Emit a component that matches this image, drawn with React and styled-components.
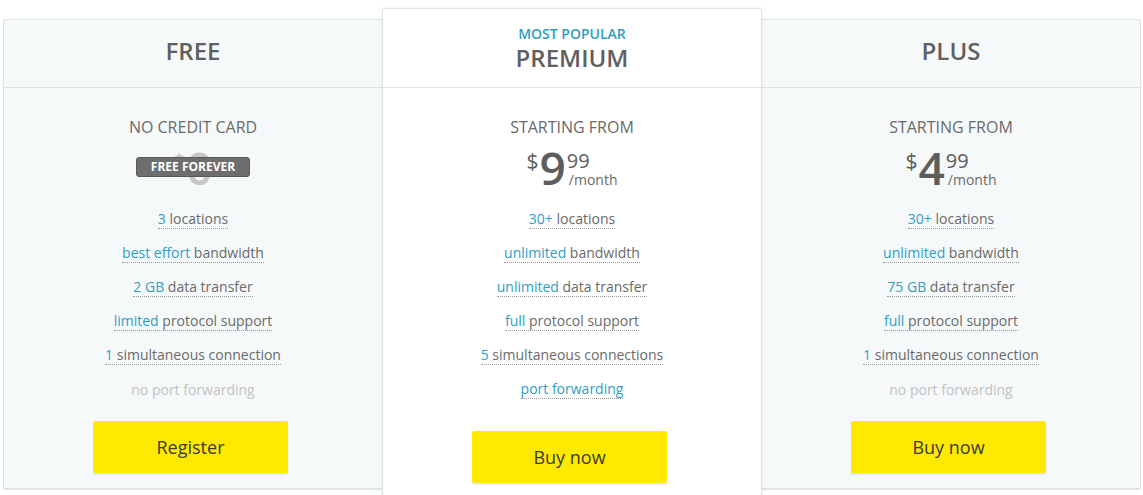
import React from 'react';
import styled, { createGlobalStyle } from 'styled-components';

const GlobalStyle = createGlobalStyle`
    * { box-sizing: border-box; }
    body {
        margin: 0;
        background: #ffffff;
        font-family: "Open Sans", "Liberation Sans", sans-serif;
        color: #666666;
    }
`;

const Plans = styled.div`
    display: flex;
    align-items: flex-start;
    padding-left: 3px;
    height: 495px;
    overflow: hidden;
`;

const Card = styled.div`
    position: relative;
    width: 380px;
    margin-top: ${p => (p.featured ? '8px' : '19px')};
    margin-left: ${p => (p.first ? '0' : '-1px')};
    z-index: ${p => (p.featured ? 1 : 0)};
    background: ${p => (p.featured ? '#ffffff' : '#f6f9fa')};
    border: 1px solid #dde4e6;
    border-bottom-width: ${p => (p.featured ? '1px' : '2px')};
    border-radius: ${p => (p.featured ? '3px' : '2px')};
    box-shadow: ${p => (p.featured ? '0 0 4px rgba(0, 0, 0, 0.06)' : 'none')};
    padding-bottom: ${p => (p.featured ? '25px' : '15px')};
`;

const Header = styled.div`
    height: ${p => (p.featured ? '79px' : '68px')};
    padding-top: ${p => (p.featured ? '16px' : '17px')};
    border-bottom: 1px solid #dde4e6;
    text-align: center;
`;

const Tag = styled.div`
    font-size: 14px;
    line-height: 18px;
    font-weight: 600;
    color: #2e9ec3;
    text-transform: uppercase;
`;

const Title = styled.div`
    font-size: 24px;
    line-height: 28px;
    font-weight: 600;
    color: #606060;
    margin-top: ${p => (p.featured ? '1px' : '0')};
`;

const Body = styled.div`
    padding-top: 28px;
    text-align: center;
`;

const Subtitle = styled.div`
    font-size: 16px;
    line-height: 22px;
    color: #6a6a6a;
    text-transform: uppercase;
`;

const PriceRow = styled.div`
    position: relative;
    display: flex;
    justify-content: center;
    align-items: flex-start;
    height: 46px;
    margin-top: 6px;
    color: ${p => (p.muted ? '#c6c6c6' : '#5d5d5d')};
`;

const Currency = styled.span`
    font-size: 21px;
    line-height: 20px;
    margin-top: 7px;
    margin-right: 1px;
`;

const Amount = styled.span`
    font-size: 46px;
    line-height: 46px;
    font-weight: 600;
`;

const Cents = styled.div`
    display: flex;
    flex-direction: column;
    align-items: flex-start;
    margin-top: 7px;
    margin-left: 1px;
`;

const Decimals = styled.span`
    font-size: 20px;
    line-height: 20px;
`;

const Period = styled.span`
    font-size: 14px;
    line-height: 16px;
    margin-top: 1px;
    margin-left: 2px;
    color: #6a6a6a;
`;

const Badge = styled.span`
    position: absolute;
    left: 50%;
    top: 13px;
    transform: translateX(-50%);
    width: 114px;
    height: 20px;
    border: 1px solid #585858;
    border-radius: 3px;
    background: #6e6e6e;
    color: #ffffff;
    font-size: 12px;
    line-height: 18px;
    font-weight: 700;
    white-space: nowrap;
`;

const Features = styled.ul`
    list-style: none;
    margin: 12px 0 0;
    padding: 0;
`;

const Feature = styled.li`
    height: 34px;
    display: flex;
    justify-content: center;
    align-items: center;
    font-size: 14px;
`;

const FeatureText = styled.span`
    line-height: 19px;
    color: ${p => (p.off ? '#c2c2c2' : '#6a6a6a')};
    border-bottom: ${p => (p.off ? 'none' : '1px dotted #9a9a9a')};
`;

const Hl = styled.span`
    color: #2e9ec3;
`;

const Button = styled.button`
    display: block;
    width: 195px;
    height: 52px;
    margin: ${p => (p.featured ? '25px' : '15px')} 0 0 89px;
    border: none;
    border-radius: 2px;
    background: #ffe900;
    box-shadow: 0 2px 1px rgba(0, 0, 0, 0.08);
    font-family: "Open Sans", "Liberation Sans", sans-serif;
    font-size: 18px;
    color: #3a3a3a;
    cursor: pointer;
`;

const plans = [
  {
    name: 'Free',
    subtitle: 'No credit card',
    price: '0',
    free: true,
    button: 'Register',
    features: [
      { hl: '3', rest: ' locations' },
      { hl: 'best effort', rest: ' bandwidth' },
      { hl: '2 GB', rest: ' data transfer' },
      { hl: 'limited', rest: ' protocol support' },
      { hl: '1', rest: ' simultaneous connection' },
      { rest: 'no port forwarding', off: true },
    ],
  },
  {
    name: 'Premium',
    tag: 'Most popular',
    featured: true,
    subtitle: 'Starting from',
    price: '9',
    cents: '99',
    button: 'Buy now',
    features: [
      { hl: '30+', rest: ' locations' },
      { hl: 'unlimited', rest: ' bandwidth' },
      { hl: 'unlimited', rest: ' data transfer' },
      { hl: 'full', rest: ' protocol support' },
      { hl: '5', rest: ' simultaneous connections' },
      { hl: 'port forwarding', rest: '' },
    ],
  },
  {
    name: 'Plus',
    subtitle: 'Starting from',
    price: '4',
    cents: '99',
    button: 'Buy now',
    features: [
      { hl: '30+', rest: ' locations' },
      { hl: 'unlimited', rest: ' bandwidth' },
      { hl: '75 GB', rest: ' data transfer' },
      { hl: 'full', rest: ' protocol support' },
      { hl: '1', rest: ' simultaneous connection' },
      { rest: 'no port forwarding', off: true },
    ],
  },
];

const PlanCard = ({ plan, first }) => (
  <Card featured={plan.featured} first={first}>
    <Header featured={plan.featured}>
      {plan.tag && <Tag>{plan.tag}</Tag>}
      <Title featured={plan.featured}>{plan.name.toUpperCase()}</Title>
    </Header>
    <Body>
      <Subtitle>{plan.subtitle}</Subtitle>
      <PriceRow muted={plan.free}>
        <Currency>$</Currency>
        <Amount>{plan.price}</Amount>
        {plan.cents && (
          <Cents>
            <Decimals>{plan.cents}</Decimals>
            <Period>/month</Period>
          </Cents>
        )}
        {plan.free && <Badge>FREE FOREVER</Badge>}
      </PriceRow>
      <Features>
        {plan.features.map((f, i) => (
          <Feature key={i}>
            <FeatureText off={f.off}>
              {f.hl && <Hl>{f.hl}</Hl>}
              {f.rest}
            </FeatureText>
          </Feature>
        ))}
      </Features>
      <Button featured={plan.featured}>{plan.button}</Button>
    </Body>
  </Card>
);

const App = () => (
  <>
    <GlobalStyle />
    <Plans>
      {plans.map((p, i) => (
        <PlanCard key={p.name} plan={p} first={i === 0} />
      ))}
    </Plans>
  </>
);

export default App;
